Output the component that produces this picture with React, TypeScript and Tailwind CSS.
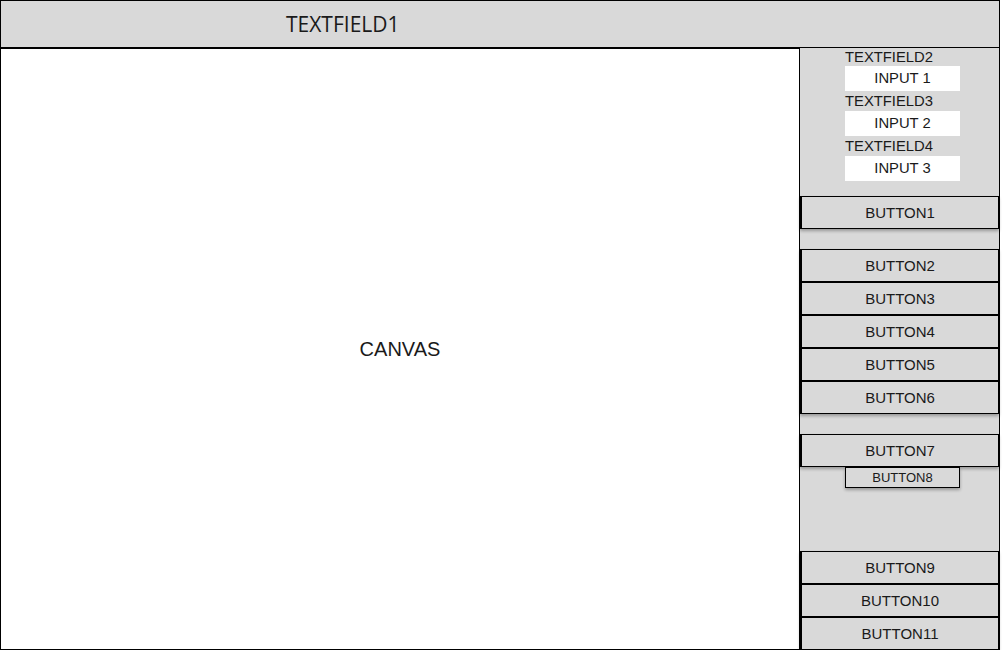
const btn =
  "h-[33px] w-full shrink-0 border border-l-2 border-black bg-[#d9d9d9] text-[15px] leading-none text-[#1a1a1a] shadow-[0_2px_3px_rgba(0,0,0,0.3)] flex items-center justify-center";

function Field({ label, value, first }: { label: string; value: string; first?: boolean }) {
  return (
    <>
      <div className={`${first ? "h-[18px]" : "h-[20px]"} flex items-center leading-none`}>{label}</div>
      <div className="h-[25px] bg-white flex items-center justify-center leading-none">{value}</div>
    </>
  );
}

export default function App() {
  return (
    <div className="w-[1000px] h-[650px] flex flex-col font-['Liberation_Sans',Arial,sans-serif] text-[#1a1a1a]">
      {/* title bar */}
      <div className="h-[48px] shrink-0 border border-black bg-[#d9d9d9] flex items-center pl-[285px] font-['Open_Sans',sans-serif] text-[21px] leading-none">
        TEXTFIELD1
      </div>

      <div className="flex flex-1 min-h-0">
        {/* canvas */}
        <div className="w-[800px] shrink-0 border border-black bg-white flex items-center justify-center text-[20px]">
          CANVAS
        </div>

        {/* side panel */}
        <div className="w-[200px] shrink-0 border-r border-black bg-[#d9d9d9] flex flex-col">
          <div className="ml-[45px] w-[115px] flex flex-col text-[14.8px]">
            <Field label="TEXTFIELD2" value="INPUT 1" first />
            <Field label="TEXTFIELD3" value="INPUT 2" />
            <Field label="TEXTFIELD4" value="INPUT 3" />
          </div>

          <button className={`${btn} mt-[15px]`}>BUTTON1</button>

          <div className="mt-[20px] flex flex-col">
            <button className={btn}>BUTTON2</button>
            <button className={btn}>BUTTON3</button>
            <button className={btn}>BUTTON4</button>
            <button className={btn}>BUTTON5</button>
            <button className={btn}>BUTTON6</button>
          </div>

          <button className={`${btn} mt-[20px]`}>BUTTON7</button>
          <button className="ml-[45px] h-[21px] w-[115px] shrink-0 border border-black bg-[#d9d9d9] text-[13px] shadow-[0_2px_3px_rgba(0,0,0,0.3)] flex items-center justify-center">
            BUTTON8
          </button>

          <div className="mt-auto flex flex-col">
            <button className={btn}>BUTTON9</button>
            <button className={btn}>BUTTON10</button>
            <button className={btn}>BUTTON11</button>
          </div>
        </div>
      </div>
    </div>
  );
}
